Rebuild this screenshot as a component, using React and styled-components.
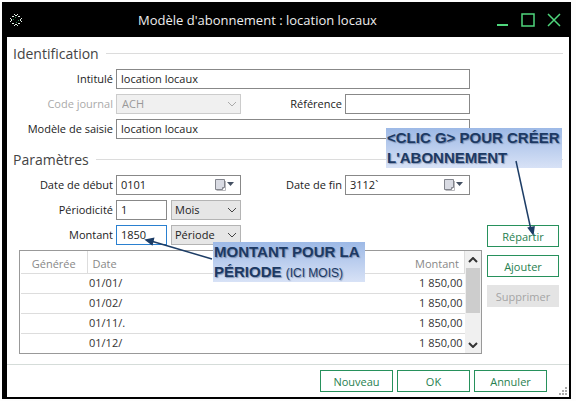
import React from "react";
import styled, { createGlobalStyle } from "styled-components";

const rows = [
  { date: "01/01/", amount: "1 850,00" },
  { date: "01/02/", amount: "1 850,00" },
  { date: "01/11/.", amount: "1 850,00" },
  { date: "01/12/", amount: "1 850,00" },
];

const Chevron = ({ color = "#555", width = 1 }) => (
  <svg width="10" height="6" viewBox="0 0 10 6" fill="none" stroke={color} strokeWidth={width}>
    <path d="M1 1 L5 5 L9 1" />
  </svg>
);

const Select = ({ id, value, disabled, label }) => (
  <SelectBox>
    <SelectInput id={id} aria-label={label} defaultValue={value} disabled={disabled}>
      <option>{value}</option>
    </SelectInput>
    <Adornment>
      <Chevron color={disabled ? "#aaa" : "#444"} />
    </Adornment>
  </SelectBox>
);

const DateField = ({ id, value }) => (
  <DateBox>
    <DateInput id={id} defaultValue={value} />
    <PickerButton type="button" aria-label="Calendrier">
      <svg width="22" height="12" viewBox="0 0 22 12">
        <path d="M2.5 0.5 h9 v8 l-2 2 h-7 z" fill="#d9dbe3" stroke="#83858d" />
        <path d="M12.5 2 v9.500 h-9" fill="none" stroke="#b9b9bd" />
        <path d="M11.5 8.500 h-2 v2" fill="#fff" stroke="#83858d" />
        <path d="M14 3 h7 l-3.500 4 z" fill="#445062" />
      </svg>
    </PickerButton>
  </DateBox>
);

const App = () => {
  return (
    <>
      <GlobalStyle />
      <Window>
        <TitleBar>
          <svg width="12" height="12" viewBox="0 0 12 12">
            <g fill="#e4efe6">
              <rect x="4" y="0" width="1" height="1" />
              <rect x="7" y="0" width="1" height="1" />
              <rect x="4" y="11" width="1" height="1" />
              <rect x="7" y="11" width="1" height="1" />
              <rect x="0" y="4" width="1" height="1" />
              <rect x="0" y="7" width="1" height="1" />
              <rect x="11" y="4" width="1" height="1" />
              <rect x="11" y="7" width="1" height="1" />
              <rect x="2" y="2" width="2" height="1" />
              <rect x="8" y="2" width="2" height="1" />
              <rect x="2" y="9" width="2" height="1" />
              <rect x="8" y="9" width="2" height="1" />
              <rect x="5" y="1" width="2" height="1" />
              <rect x="5" y="10" width="2" height="1" />
              <rect x="1" y="5" width="1" height="2" />
              <rect x="10" y="5" width="1" height="2" />
            </g>
            <g fill="#2f8f50">
              <rect x="5" y="3" width="1" height="1" />
              <rect x="3" y="5" width="1" height="1" />
              <rect x="8" y="6" width="1" height="1" />
              <rect x="6" y="8" width="1" height="1" />
            </g>
          </svg>
          <Title>Modèle d'abonnement : location locaux</Title>
          <WindowButtons>
            <WindowButton type="button" aria-label="Réduire">
              <svg width="12" height="14" viewBox="0 0 12 14">
                <path d="M0 12 H11" stroke="#4fd67c" strokeWidth="2" />
              </svg>
            </WindowButton>
            <WindowButton type="button" aria-label="Agrandir">
              <svg width="14" height="14" viewBox="0 0 14 14">
                <rect x="1" y="1" width="12" height="12" fill="none" stroke="#4fd67c" strokeWidth="1.500" />
              </svg>
            </WindowButton>
            <WindowButton type="button" aria-label="Fermer">
              <svg width="14" height="14" viewBox="0 0 14 14">
                <path d="M1 1 L13 13 M13 1 L1 13" stroke="#4fd67c" strokeWidth="1.500" />
              </svg>
            </WindowButton>
          </WindowButtons>
        </TitleBar>

        <Body>
          <SectionTitle>Identification</SectionTitle>
          <Columns>
            <Fields>
              <Label htmlFor="intitule">Intitulé</Label>
              <Wide>
                <Input id="intitule" defaultValue="location locaux" />
              </Wide>
              <Label htmlFor="journal" $muted>Code journal</Label>
              <Select id="journal" value="ACH" disabled />
              <Label htmlFor="reference">Référence</Label>
              <Input id="reference" />
              <Label htmlFor="modele">Modèle de saisie</Label>
              <Wide>
                <Input id="modele" defaultValue="location locaux" />
              </Wide>
            </Fields>
          </Columns>

          <SectionTitle>Paramètres</SectionTitle>
          <Columns>
            <div>
              <Fields>
                <Label htmlFor="debut">Date de début</Label>
                <DateField id="debut" value="0101" />
                <Label htmlFor="fin">Date de fin</Label>
                <DateField id="fin" value="3112`" />
                <Label htmlFor="periodicite">Périodicité</Label>
                <Pair>
                  <Input id="periodicite" defaultValue="1" />
                  <Select id="unite" value="Mois" label="Unité de périodicité" />
                </Pair>
                <Label htmlFor="montant">Montant</Label>
                <Pair>
                  <Input id="montant" defaultValue="1850" $active />
                  <Select id="base" value="Période" label="Base du montant" />
                </Pair>
              </Fields>
              <TableFrame>
                <Table>
                  <thead>
                    <tr>
                      <HeadCell $width="66px" $align="center">Générée</HeadCell>
                      <HeadCell>Date</HeadCell>
                      <HeadCell $align="right">Montant</HeadCell>
                    </tr>
                  </thead>
                  <tbody>
                    {rows.map((row) => (
                      <tr key={row.date}>
                        <Cell />
                        <Cell>{row.date}</Cell>
                        <Cell $align="right">{row.amount}</Cell>
                      </tr>
                    ))}
                  </tbody>
                </Table>
                <ScrollBar>
                  <ScrollArrow $up>
                    <Chevron color="#333" width={2} />
                  </ScrollArrow>
                  <Thumb />
                  <ScrollArrow>
                    <Chevron color="#333" width={2} />
                  </ScrollArrow>
                </ScrollBar>
              </TableFrame>
            </div>
            <Side>
              <Button type="button">Répartir</Button>
              <Button type="button">Ajouter</Button>
              <Button type="button" disabled>Supprimer</Button>
            </Side>
          </Columns>
        </Body>

        <Footer>
          <Button type="button">Nouveau</Button>
          <Button type="button">OK</Button>
          <Button type="button">Annuler</Button>
          <Grip width="9" height="9" viewBox="0 0 9 9" fill="#aaa">
            <path d="M7 1h2v2h-2z M7 4h2v2h-2z M4 4h2v2h-2z M7 7h2v2h-2z M4 7h2v2h-2z M1 7h2v2h-2z" />
          </Grip>
        </Footer>

        <Callout $left="384px" $top="126px" $width="176px">
          &lt;CLIC G&gt; POUR CRÉER
          <br />
          L'ABONNEMENT
        </Callout>
        <Callout $left="211px" $top="240px" $width="152px">
          MONTANT POUR LA
          <br />
          PÉRIODE <small>(ICI MOIS)</small>
        </Callout>
        <Arrows width="569" height="397" viewBox="2 2 569 397">
          <g stroke="#1d3d66" strokeWidth="1.500" fill="#1d3d66">
            <path d="M516 161 L531 230" />
            <path d="M533 234 L528.500 228 L534 227 Z" />
            <path d="M212 259 L151 241" />
            <path d="M146 240 L153.500 238.500 L152 244.500 Z" />
          </g>
        </Arrows>
      </Window>
    </>
  );
};

export default App;

const GlobalStyle = createGlobalStyle`
  * {
    box-sizing: border-box;
  }

  body {
    margin: 0;
    background: #fdfdfd;
    font-family: "Open Sans", "Noto Sans", sans-serif;
    font-size: 11px;
    color: #222;
  }

  input, select, button {
    font: inherit;
    color: inherit;
    margin: 0;
  }
`;

const Window = styled.div`
  position: relative;
  margin: 2px 5px 2px 2px;
  background: #000;
  padding: 0 2px 2px 5px;
`;

const TitleBar = styled.header`
  display: flex;
  align-items: center;
  height: 35px;
  padding: 0 8px 0 3px;
`;

const Title = styled.h1`
  flex: 1;
  margin: 0;
  padding-right: 4px;
  text-align: center;
  font-size: 13px;
  font-weight: 400;
  color: #eee;
`;

const WindowButtons = styled.div`
  display: flex;
  gap: 12px;
`;

const WindowButton = styled.button`
  display: flex;
  border: 0;
  padding: 0;
  background: none;
`;

const Body = styled.main`
  background: #fff;
  padding: 4px 10px 10px 0;
`;

const SectionTitle = styled.h2`
  display: flex;
  align-items: center;
  gap: 7px;
  height: 24px;
  margin: 0 -4px 4px 6px;
  font-size: 14px;
  font-weight: 400;
  color: #444;

  &::after {
    content: "";
    flex: 1;
    border-top: 1px solid #dcdcdc;
  }
`;

const Columns = styled.div`
  display: grid;
  grid-template-columns: 1fr 72px;
  gap: 5px;
  margin-bottom: 8px;

  &:last-child {
    margin-bottom: 0;
  }
`;

const Fields = styled.div`
  display: grid;
  grid-template-columns: 106px 125px 1fr 125px;
  grid-auto-rows: 20px;
  gap: 5px 3px;
  align-items: stretch;
  margin-right: 12px;

  & > label:nth-of-type(4) {
    grid-column: 1;
  }
`;

const Label = styled.label`
  line-height: 20px;
  text-align: right;
  white-space: nowrap;
  color: ${(props) => (props.$muted ? "#aaa" : "#222")};
`;

const Wide = styled.div`
  grid-column: span 3;
  display: grid;
`;

const Pair = styled.div`
  display: grid;
  grid-template-columns: 51px 1fr;
  gap: 4px;
`;

const Input = styled.input`
  width: 100%;
  min-width: 0;
  padding: 0 4px 2px;
  border: 1px solid ${(props) => (props.$active ? "#2a80d0" : "#888")};
  border-radius: 0;
  background: #fff;
`;

const SelectBox = styled.div`
  position: relative;
  display: grid;
`;

const SelectInput = styled.select`
  appearance: none;
  width: 100%;
  padding: 0 3px 2px;
  border: 1px solid #b4b4b4;
  border-radius: 0;
  background: #e6e6e6;

  &:disabled {
    padding: 0 5px 2px;
    border-color: #ccc;
    background: #f0f0f0;
    color: #999;
    opacity: 1;
  }
`;

const Adornment = styled.span`
  position: absolute;
  right: 4px;
  top: 0;
  bottom: 0;
  display: flex;
  align-items: center;
  pointer-events: none;
`;

const DateBox = styled.div`
  position: relative;
  display: grid;
`;

const DateInput = styled(Input)`
  padding-right: 28px;
`;

const PickerButton = styled.button`
  position: absolute;
  right: 6px;
  top: 0;
  bottom: 0;
  display: flex;
  align-items: center;
  border: 0;
  padding: 0;
  background: none;
`;

const TableFrame = styled.div`
  display: flex;
  margin: 5px 0 0 12px;
  border: 1px solid #999;
  padding-left: 1px;
`;

const Table = styled.table`
  flex: 1;
  border-collapse: collapse;
`;

const HeadCell = styled.th`
  width: ${(props) => props.$width || "auto"};
  height: 22px;
  padding: 4px 5px 0;
  border-right: 1px solid #ddd;
  border-bottom: 1px solid #ddd;
  font-weight: 400;
  line-height: 16px;
  text-align: ${(props) => props.$align || "left"};
  color: #888;

  &:nth-child(2) {
    border-right: 0;
  }
`;

const Cell = styled.td`
  height: 20px;
  padding: 0 2px;
  border-bottom: 1px solid #ddd;
  line-height: 18px;
  text-align: ${(props) => props.$align || "left"};
  color: #333;

  tr:last-child > & {
    border-bottom: 0;
  }
`;

const ScrollBar = styled.div`
  display: flex;
  flex-direction: column;
  width: 16px;
  background: #f0f0f0;
`;

const ScrollArrow = styled.span`
  display: flex;
  align-items: center;
  justify-content: center;
  height: 17px;
  margin-top: ${(props) => (props.$up ? "0" : "auto")};

  svg {
    transform: ${(props) => (props.$up ? "rotate(180deg)" : "none")};
  }
`;

const Thumb = styled.span`
  height: 45px;
  margin: 0 1px;
  background: #cdcdcd;
`;

const Side = styled.div`
  display: flex;
  flex-direction: column;
  gap: 8px;
  padding-top: 50px;
`;

const Button = styled.button`
  height: 22px;
  padding: 0;
  border: 1px solid #27915c;
  border-radius: 0;
  background: #fff;
  color: #27804f;

  &:disabled {
    border-color: #e4e4e4;
    background: #e4e4e4;
    color: #a5a5a5;
  }
`;

const Footer = styled.footer`
  position: relative;
  display: flex;
  justify-content: flex-end;
  gap: 4px;
  padding: 5px 22px 5px 0;
  border-top: 1px solid #d5dcd9;
  background: #fff;

  ${Button} {
    width: 73px;
  }
`;

const Grip = styled.svg`
  position: absolute;
  right: 2px;
  bottom: 2px;
`;

const Callout = styled.div`
  position: absolute;
  left: ${(props) => props.$left};
  top: ${(props) => props.$top};
  width: ${(props) => props.$width};
  height: 40px;
  padding: 0 1px;
  background: linear-gradient(#9db9e6, #d8e2f6);
  font-family: "Liberation Sans", Arial, sans-serif;
  font-size: 15px;
  font-weight: 700;
  line-height: 20px;
  white-space: nowrap;
  color: #1c3963;
  text-shadow: 1px 1px 1px rgba(60, 80, 120, 0.5);

  small {
    font-size: 12px;
    font-weight: 400;
  }
`;

const Arrows = styled.svg`
  position: absolute;
  left: 0;
  top: 0;
  pointer-events: none;
`;
